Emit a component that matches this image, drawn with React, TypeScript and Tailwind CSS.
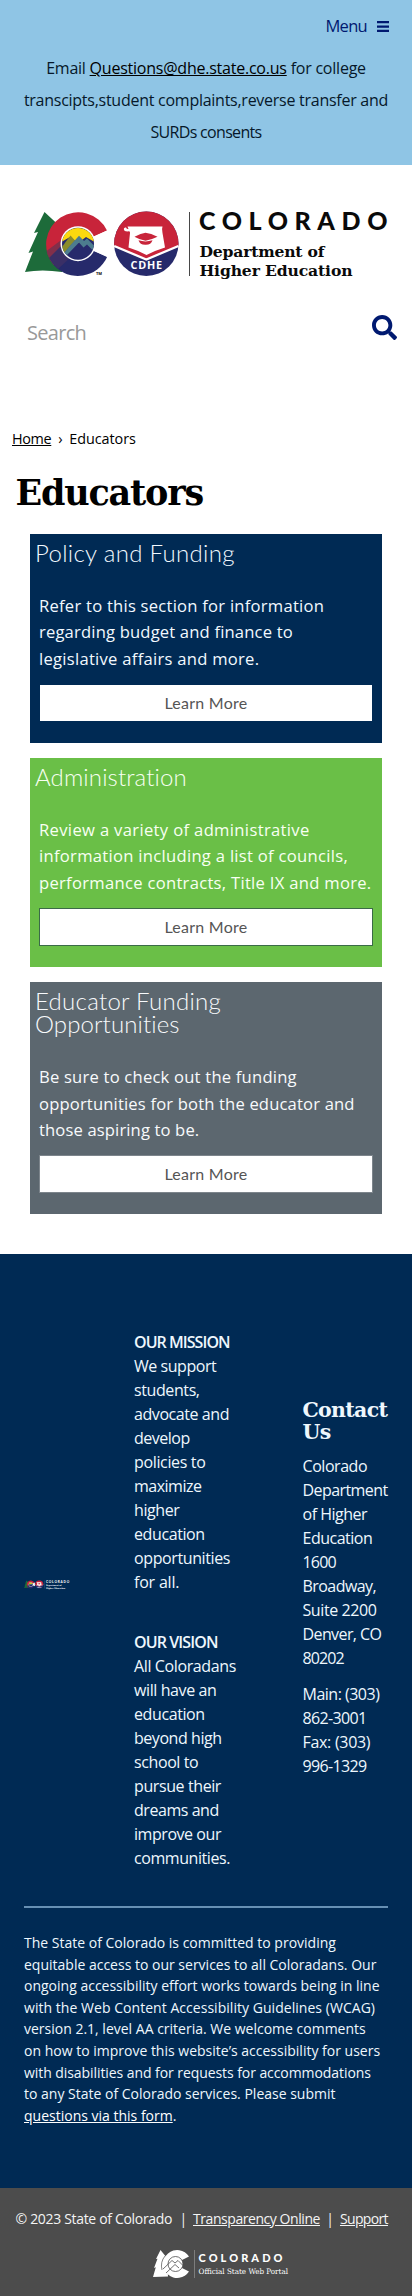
import React from "react";

type Row = [text: string, tracking: string];

function Lines({ rows }: { rows: Row[] }) {
  return (
    <>
      {rows.map(([text, tracking]) => (
        <span key={text} className={`block whitespace-nowrap ${tracking}`}>
          {text}
        </span>
      ))}
    </>
  );
}

function TreeAndC() {
  return (
    <>
      <path
        d="M44.5 212 L34 233 L38 232 L28.5 253 L33 251.5 L25 272 Q42 269 62 272 L66 232 Z"
        fill="#1d6b3a"
      />
      <path d="M77.7 243.7 L107 230.5 A32 32 0 1 0 54 265.300 Z" fill="#c8243a" />
      <path d="M77.7 243.7 L54 265.300 A32 32 0 0 0 107.200 256.700 Z" fill="#262a6b" />
      <path d="M46.500 251 L64 238 L70 252 L54 265.300 Q48 259 46.500 251 Z" fill="#6b3350" opacity=".75" />
      <path d="M49 258 L64 243 L72 256 L58 269 Q52 264 49 258 Z" fill="#3a2f66" />
      <path d="M111 228.700 L77.700 243.700 L111 258.700 Z" fill="#fff" />
      <circle cx="78" cy="243.700" r="17.500" fill="#fff" />
      <circle cx="78" cy="243.700" r="16" fill="#262a6b" />
      <path d="M62.200 241.500 A16 16 0 0 1 93.800 241.500 L86 237 L78 243 L70 237 Z" fill="#fbd90f" />
      <path d="M62.300 246.500 L70.500 235.500 L75 240.500 L64.500 252.500 Q62.800 250 62.300 246.500 Z" fill="#8b8c2b" />
      <path d="M71.500 244 L79 235.800 L84 241 L87 238.500 L93.900 245.500 L92.500 250 L87 244.500 L83.500 247.500 L79 242.500 L67 255 L64.500 252.500 Z" fill="#4d7d8e" />
    </>
  );
}

function Badge() {
  return (
    <>
      <circle cx="146.300" cy="243.700" r="32.200" fill="#262a6b" />
      <path d="M114.100 243.700 A32.200 32.200 0 0 1 178.500 243.700 L178 247 L146.300 259 L114.600 247 Z" fill="#c8243a" />
      <path d="M114.200 246 L146.300 259.500 L178.400 246" fill="none" stroke="#fff" strokeWidth="2.300" />
      <path
        d="M127.500 226.500 H162.500 Q161.500 229 162.500 233 L165 247.500 Q155 250.500 146.500 255 Q138 250.500 128.500 247.500 L130 233 Q130.500 230.500 127.500 231.500 Q124 231.500 123.800 229 Q124 227 126 227.500 Q127 229.500 128.500 229 Z"
        fill="#fff"
      />
      <path d="M134.500 236.800 Q141 233.500 145.500 232.800 Q151 233.500 157.500 236.800 Q151 240 145.500 240.800 Q140 240 134.500 236.800 Z" fill="#c8243a" />
      <path d="M138.500 240.300 Q145.500 242.500 152.500 240.300 Q151 245 145.500 244.800 Q140 245 138.500 240.300 Z" fill="#c8243a" />
    </>
  );
}

function DepartmentLogo({ className, ink }: { className: string; ink: string }) {
  return (
    <svg viewBox="24 208 368 72" className={`overflow-visible ${className}`} fill={ink}>
      <TreeAndC />
      <Badge />
      <text x="130.500" y="269" fontFamily="Open Sans" fontWeight="700" fontSize="10.800" textLength="31.500" fill="#fff">
        CDHE
      </text>
      <text x="96" y="274.500" fontFamily="Open Sans" fontWeight="700" fontSize="4">
        TM
      </text>
      <path d="M189 212h1v64h-1z" opacity=".75" />
      <text x="199" y="230" fontFamily="Lato" fontWeight="900" fontSize="25" letterSpacing="6.600">
        COLORADO
      </text>
      <text x="199.500" y="257" fontFamily="DejaVu Serif" fontWeight="700" fontSize="15.600" textLength="125">
        Department of
      </text>
      <text x="199.500" y="276" fontFamily="DejaVu Serif" fontWeight="700" fontSize="15.600" textLength="153">
        Higher Education
      </text>
    </svg>
  );
}

function PortalLogo() {
  return (
    <svg viewBox="152 2248 140 32" className="h-8 w-[140px]" fill="#fff">
      <path d="M160.500 2250 L156 2259 L157.500 2258.700 L154 2268 L155.800 2267.300 L153 2277 L168 2276.500 L167 2258 Z" />
      <path d="M189 2256.500 A14 14 0 1 0 189 2271.500 L180 2267 L180 2261 Z" />
      <circle cx="175.500" cy="2264" r="7.500" fill="#fff" stroke="#4c4c4c" strokeWidth=".8" />
      <path d="M163 2269 L172 2260.500 L175 2263 L178 2260.500 L182.500 2265 M166 2273 L175 2264.500 L179 2268" fill="none" stroke="#4c4c4c" strokeWidth=".8" />
      <path d="M162 2270 Q160 2262 165 2256" fill="none" stroke="#4c4c4c" strokeWidth=".7" />
      <path d="M194 2250h.8v28h-.8z" opacity=".35" />
      <text x="198.500" y="2262" fontFamily="Lato" fontWeight="900" fontSize="11" textLength="84">
        COLORADO
      </text>
      <text x="198.500" y="2274" fontFamily="DejaVu Serif" fontSize="7.500" textLength="89.500" lengthAdjust="spacingAndGlyphs">
        Official State Web Portal
      </text>
    </svg>
  );
}

function Card({ color, border, title, rows }: { color: string; border: string; title: Row[]; rows: Row[] }) {
  return (
    <section className={`flex flex-col px-[9px] pt-[7px] pb-[21px] ${color}`}>
      <h2 className="-ml-[4px] font-['Lato',sans-serif] text-[24px] leading-[23.400px] font-light">
        <Lines rows={title} />
      </h2>
      <p className="mt-[28.400px] text-[16.600px] leading-[26.600px]">
        <Lines rows={rows} />
      </p>
      <a
        href="#"
        className={`mt-[11px] flex h-[38px] items-center justify-center border bg-white font-['Lato',sans-serif] text-[16px] tracking-[0.250px] text-[#555] ${border}`}
      >
        Learn More
      </a>
    </section>
  );
}

export default function App() {
  return (
    <div className="flex w-[412px] flex-col bg-white font-['Open_Sans',sans-serif] text-black">
      <header>
        <div className="h-[165px] bg-[#8fc5e5]">
          <div className="flex h-[52px] items-center justify-end gap-[10px] pr-[23px] text-[#001970]">
            <span className="text-[16.500px] tracking-[-0.700px]">Menu</span>
            <svg viewBox="0 0 12 11" className="h-[11px] w-[12px]" fill="currentColor">
              <path d="M0 0h12v2.300H0zM0 4.400h12v2.300H0zM0 8.700h12V11H0z" />
            </svg>
          </div>
          <p className="text-center text-[16px] leading-8 text-[#06182a]">
            <span className="block whitespace-nowrap tracking-[-0.230px]">
              Email{" "}
              <a href="#" className="text-black underline">
                Questions@dhe.state.co.us
              </a>{" "}
              for college
            </span>
            <Lines
              rows={[
                ["transcipts,student complaints,reverse transfer and", "tracking-[-0.260px]"],
                ["SURDs consents", "tracking-[-0.680px]"],
              ]}
            />
          </p>
        </div>
        <div className="flex h-[143px] items-start pt-[43px] pl-6">
          <DepartmentLogo className="h-[72px] w-[368px]" ink="#0a0a0a" />
        </div>
        <div className="flex h-[50px] justify-between pr-[15px] pl-[27px]">
          <span className="pt-[11px] text-[20px] leading-[28px] tracking-[-0.700px] text-[#999]">Search</span>
          <svg viewBox="0 0 512 512" className="mt-[7px] h-[25px] w-[25px]" fill="#001970">
            <path d="M505 442.700L405.300 343c-4.500-4.500-10.600-7-17-7H372c27.600-35.300 44-79.700 44-128C416 93.100 322.900 0 208 0S0 93.100 0 208s93.100 208 208 208c48.300 0 92.700-16.400 128-44v16.300c0 6.400 2.500 12.500 7 17l99.700 99.700c9.400 9.400 24.600 9.400 33.900 0l28.300-28.300c9.400-9.400 9.400-24.600.1-34zM208 336c-70.700 0-128-57.200-128-128 0-70.700 57.200-128 128-128 70.700 0 128 57.200 128 128 0 70.700-57.200 128-128 128z" />
          </svg>
        </div>
      </header>

      <main className="h-[896px] pt-[69px]">
        <nav className="flex pl-[12px] text-[14.400px] leading-6 tracking-[-0.350px]">
          <a href="#" className="underline">
            Home
          </a>
          <span className="px-[7px]">›</span>
          <span className="tracking-[-0.060px]">Educators</span>
        </nav>
        <h1 className="mt-[20px] pl-[15.500px] font-['DejaVu_Serif',serif] text-[35px] leading-[44px] font-bold tracking-[-1.200px]">
          Educators
        </h1>
        <div className="mx-[30px] mt-[19px] flex flex-col gap-[15.400px]">
          <Card
            color="bg-[#002a54] text-[#f2f9ff]"
            border="border-[#002a54]"
            title={[["Policy and Funding", "tracking-[0.320px]"]]}
            rows={[
              ["Refer to this section for information", "tracking-[0.240px]"],
              ["regarding budget and finance to", "tracking-[0.170px]"],
              ["legislative affairs and more.", "tracking-[0.270px]"],
            ]}
          />
          <Card
            color="bg-[#6abf47] text-[#f8fff2]"
            border="border-[#3b6b48]"
            title={[["Administration", "tracking-[0.120px]"]]}
            rows={[
              ["Review a variety of administrative", "tracking-[0.340px]"],
              ["information including a list of councils,", "tracking-[0.290px]"],
              ["performance contracts, Title IX and more.", "tracking-[0.290px]"],
            ]}
          />
          <Card
            color="bg-[#5c676f] text-[#f8fafc]"
            border="border-[#7d858c]"
            title={[
              ["Educator Funding", "tracking-[0.280px]"],
              ["Opportunities", "tracking-[0.100px]"],
            ]}
            rows={[
              ["Be sure to check out the funding", "tracking-[0.210px]"],
              ["opportunities for both the educator and", "tracking-[0.160px]"],
              ["those aspiring to be.", "tracking-[0.130px]"],
            ]}
          />
        </div>
      </main>

      <footer>
        <div className="h-[934px] bg-[#002a54] px-6 pt-[76px] text-[#eef7fd]">
          <div className="flex h-[576px] items-stretch text-[16px] leading-6">
            <div className="flex w-[110px] items-center">
              <DepartmentLogo className="mt-[-68px] h-[9px] w-[46px]" ink="#fff" />
            </div>
            <div className="w-[168.500px]">
              <h3 className="font-semibold tracking-[-0.950px]">OUR MISSION</h3>
              <Lines
                rows={[
                  ["We support", "tracking-[-0.450px]"],
                  ["students,", "tracking-[-0.400px]"],
                  ["advocate and", "tracking-[-0.430px]"],
                  ["develop", "tracking-[-0.500px]"],
                  ["policies to", "tracking-[-0.350px]"],
                  ["maximize", "tracking-[-0.500px]"],
                  ["higher", "tracking-[-0.400px]"],
                  ["education", "tracking-[-0.400px]"],
                  ["opportunities", "tracking-[-0.390px]"],
                  ["for all.", "tracking-[-0.200px]"],
                ]}
              />
              <h3 className="mt-9 font-semibold tracking-[-0.900px]">OUR VISION</h3>
              <Lines
                rows={[
                  ["All Coloradans", "tracking-[-0.380px]"],
                  ["will have an", "tracking-[-0.400px]"],
                  ["education", "tracking-[-0.400px]"],
                  ["beyond high", "tracking-[-0.450px]"],
                  ["school to", "tracking-[-0.400px]"],
                  ["pursue their", "tracking-[-0.400px]"],
                  ["dreams and", "tracking-[-0.450px]"],
                  ["improve our", "tracking-[-0.450px]"],
                  ["communities.", "tracking-[-0.430px]"],
                ]}
              />
            </div>
            <div className="pt-[69px]">
              <h3 className="font-['DejaVu_Serif',serif] text-[20.500px] leading-[22.400px] font-bold tracking-[-0.700px]">
                Contact
                <br />
                Us
              </h3>
              <div className="mt-[10.200px]">
                <Lines
                  rows={[
                    ["Colorado", "tracking-[-0.450px]"],
                    ["Department", "tracking-[-0.580px]"],
                    ["of Higher", "tracking-[-0.500px]"],
                    ["Education", "tracking-[-0.500px]"],
                    ["1600", "tracking-[-0.800px]"],
                    ["Broadway,", "tracking-[-0.550px]"],
                    ["Suite 2200", "tracking-[-0.410px]"],
                    ["Denver, CO", "tracking-[-0.600px]"],
                    ["80202", "tracking-[-0.900px]"],
                  ]}
                />
              </div>
              <div className="mt-3">
                <Lines
                  rows={[
                    ["Main: (303)", "tracking-[-0.500px]"],
                    ["862-3001", "tracking-[-0.650px]"],
                    ["Fax: (303)", "tracking-[-0.300px]"],
                    ["996-1329", "tracking-[-0.650px]"],
                  ]}
                />
              </div>
            </div>
          </div>
          <hr className="border-t-2 border-[#668fb3]" />
          <p className="mt-[24px] text-[14px] leading-[21.600px]">
            <Lines
              rows={[
                ["The State of Colorado is committed to providing", "tracking-[0]"],
                ["equitable access to our services to all Coloradans. Our", "tracking-[0]"],
                ["ongoing accessibility effort works towards being in line", "tracking-[0]"],
                ["with the Web Content Accessibility Guidelines (WCAG)", "tracking-[0.040px]"],
                ["version 2.1, level AA criteria. We welcome comments", "tracking-[0]"],
                ["on how to improve this website’s accessibility for users", "tracking-[0]"],
                ["with disabilities and for requests for accommodations", "tracking-[-0.070px]"],
                ["to any State of Colorado services. Please submit", "tracking-[0]"],
              ]}
            />
            <a href="#" className="text-white underline">
              questions via this form
            </a>
            .
          </p>
        </div>
        <div className="flex h-[108px] flex-col bg-[#4c4c4c] pt-[20px] text-[#f4f4f4]">
          <div className="flex pl-[15.500px] text-[14px] leading-[22px] whitespace-nowrap">
            <span className="w-[164px] tracking-[-0.320px]">© 2023 State of Colorado</span>
            <span className="w-[4.500px] text-center">|</span>
            <a href="#" className="ml-[9px] tracking-[-0.440px] underline">
              Transparency Online
            </a>
            <span className="w-[20px] text-center">|</span>
            <a href="#" className="tracking-[-0.650px] underline">
              Support
            </a>
          </div>
          <div className="mt-[18px] flex pl-[152px]">
            <PortalLogo />
          </div>
        </div>
      </footer>
    </div>
  );
}
